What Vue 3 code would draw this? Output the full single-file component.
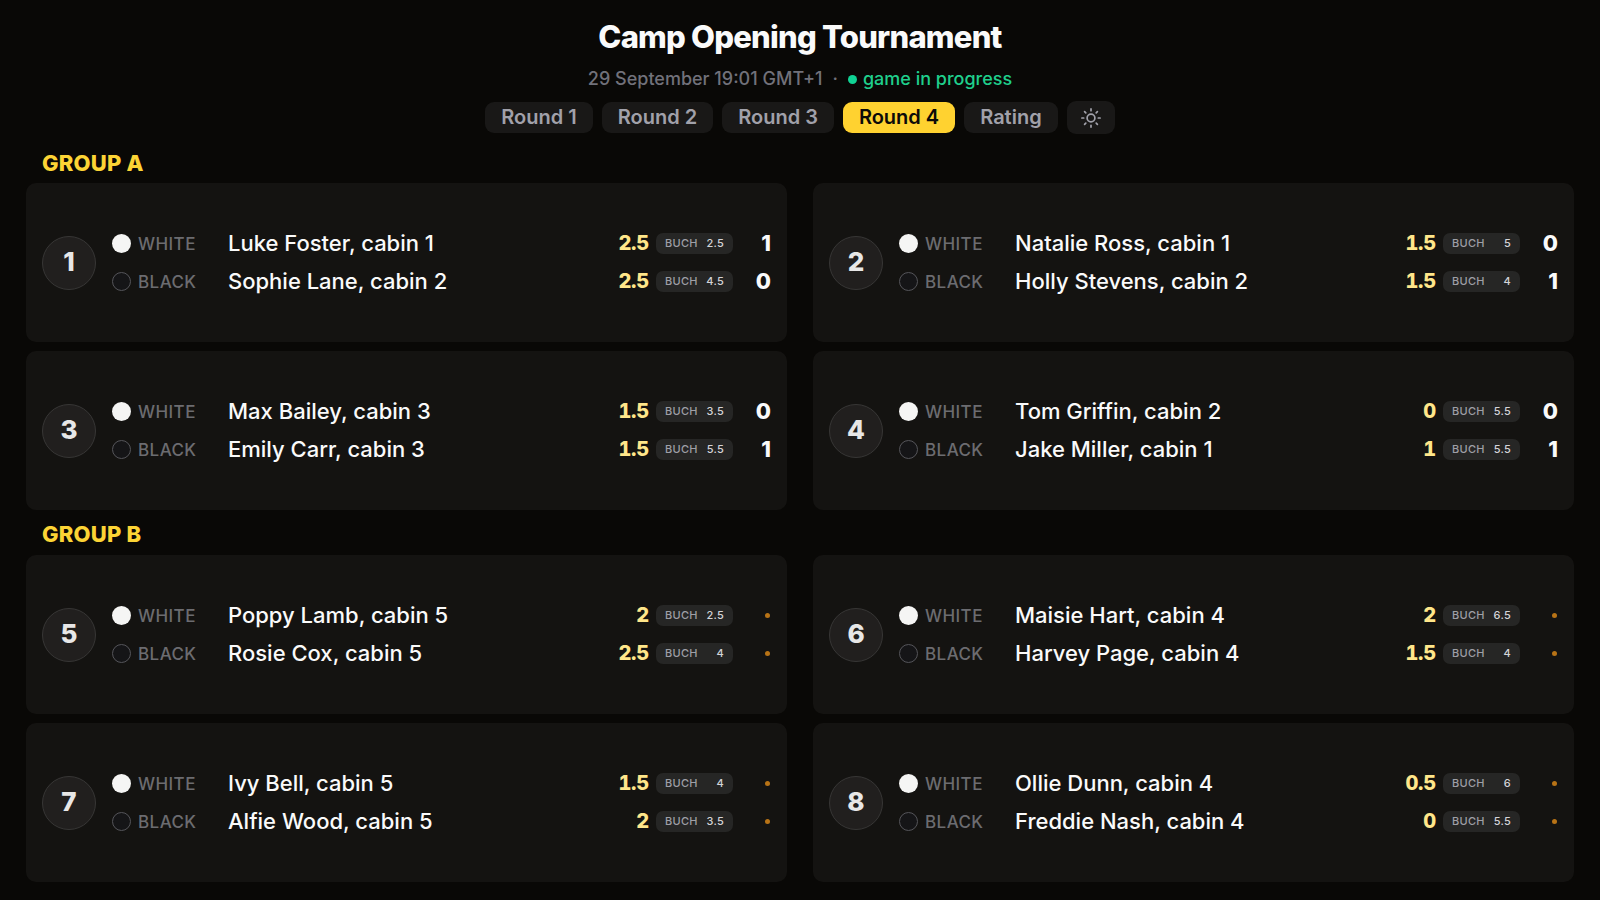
<script setup>
import { ref } from 'vue'

const tabs = ['Round 1', 'Round 2', 'Round 3', 'Round 4', 'Rating']
const active = ref('Round 4')

const player = (name, points, buch, result = null) => ({ name, points, buch, result })

const groups = [
  {
    title: 'Group A',
    boards: [
      { no: 1, white: player('Luke Foster, cabin 1', '2.5', '2.5', '1'), black: player('Sophie Lane, cabin 2', '2.5', '4.5', '0') },
      { no: 2, white: player('Natalie Ross, cabin 1', '1.5', '5', '0'), black: player('Holly Stevens, cabin 2', '1.5', '4', '1') },
      { no: 3, white: player('Max Bailey, cabin 3', '1.5', '3.5', '0'), black: player('Emily Carr, cabin 3', '1.5', '5.5', '1') },
      { no: 4, white: player('Tom Griffin, cabin 2', '0', '5.5', '0'), black: player('Jake Miller, cabin 1', '1', '5.5', '1') }
    ]
  },
  {
    title: 'Group B',
    boards: [
      { no: 5, white: player('Poppy Lamb, cabin 5', '2', '2.5'), black: player('Rosie Cox, cabin 5', '2.5', '4') },
      { no: 6, white: player('Maisie Hart, cabin 4', '2', '6.5'), black: player('Harvey Page, cabin 4', '1.5', '4') },
      { no: 7, white: player('Ivy Bell, cabin 5', '1.5', '4'), black: player('Alfie Wood, cabin 5', '2', '3.5') },
      { no: 8, white: player('Ollie Dunn, cabin 4', '0.5', '6'), black: player('Freddie Nash, cabin 4', '0', '5.5') }
    ]
  }
]
</script>

<template>
  <main class="page">
    <header class="header">
      <h1 class="title">Camp Opening Tournament</h1>
      <p class="meta">
        <span>29 September 19:01 GMT+1</span>
        <span class="sep">·</span>
        <span class="status"><i class="status-dot"></i>game in progress</span>
      </p>
      <nav class="tabs">
        <button
          v-for="tab in tabs"
          :key="tab"
          type="button"
          class="tab"
          :class="{ active: tab === active }"
          @click="active = tab"
        >{{ tab }}</button>
        <button type="button" class="theme" aria-label="Toggle theme">
          <svg width="20" height="20" viewBox="0 0 20 20" fill="none" stroke="currentColor" stroke-width="1.7" stroke-linecap="round">
            <circle cx="10" cy="10" r="3.9" />
            <path d="M10 .9v1.8M10 17.3v1.8M.9 10h1.8M17.3 10h1.8M3.6 3.6l1.2 1.2M15.2 15.2l1.2 1.2M3.6 16.4l1.2-1.2M15.2 4.8l1.2-1.2" />
          </svg>
        </button>
      </nav>
    </header>

    <section v-for="group in groups" :key="group.title" class="group">
      <h2 class="group-title">{{ group.title }}</h2>
      <div class="boards">
        <article v-for="board in group.boards" :key="board.no" class="board">
          <div class="number">{{ board.no }}</div>
          <div class="players">
            <div v-for="side in ['white', 'black']" :key="side" class="player">
              <span class="side"><i class="piece" :class="side"></i>{{ side }}</span>
              <span class="name">{{ board[side].name }}</span>
              <span class="points">{{ board[side].points }}</span>
              <span class="buch"><span>BUCH</span><b>{{ board[side].buch }}</b></span>
              <span class="result">
                <template v-if="board[side].result !== null">{{ board[side].result }}</template>
                <i v-else class="pending"></i>
              </span>
            </div>
          </div>
        </article>
      </div>
    </section>
  </main>
</template>

<style>
body {
  background: #090806;
}
</style>

<style scoped>
.page {
  box-sizing: border-box;
  min-height: 100vh;
  display: flex;
  flex-direction: column;
  padding: 17px 26px 18px;
  background: #090806;
  color: #fafafa;
  font-family: Inter, "Liberation Sans", sans-serif;
}
.header {
  display: flex;
  flex-direction: column;
  align-items: center;
}
.title {
  margin: 0;
  font-size: 31px;
  line-height: 40px;
  font-weight: 800;
  letter-spacing: -0.025em;
}
.meta {
  display: flex;
  align-items: center;
  gap: 10px;
  margin: 9px 0;
  font-size: 18px;
  line-height: 26px;
  font-weight: 500;
  color: #71717a;
}
.status {
  display: flex;
  align-items: center;
  gap: 6px;
  color: #1fcf8c;
}
.status-dot {
  width: 9px;
  height: 9px;
  border-radius: 50%;
  background: #10d394;
}
.tabs {
  display: flex;
  align-items: center;
  gap: 9px;
}
.tab,
.theme {
  border: 0;
  padding: 0 16px;
  border-radius: 9px;
  background: #191817;
  color: #a1a1aa;
  font-family: inherit;
  cursor: pointer;
}
.tab {
  height: 31px;
  font-size: 20px;
  line-height: 31px;
  font-weight: 600;
}
.tab.active {
  background: #ffd230;
  color: #0c0a09;
}
.theme {
  display: flex;
  align-items: center;
  justify-content: center;
  width: 48px;
  height: 33px;
  padding: 0;
}
.group {
  flex: 1;
  display: flex;
  flex-direction: column;
}
.group-title {
  margin: 0;
  padding: 10px 16px 7px;
  font-size: 22px;
  line-height: 28px;
  font-weight: 800;
  letter-spacing: 0.01em;
  color: #fcd435;
  text-transform: uppercase;
}
.header + .group .group-title {
  padding: 15px 16px 6px;
}
.boards {
  flex: 1;
  display: grid;
  grid-template-columns: 1fr 1fr;
  grid-auto-rows: 1fr;
  gap: 9px 26px;
}
.board {
  display: flex;
  align-items: center;
  gap: 16px;
  padding: 0 16px;
  border-radius: 10px;
  background: #141311;
}
.number {
  box-sizing: border-box;
  flex: none;
  width: 54px;
  height: 54px;
  border: 1px solid #373635;
  border-radius: 50%;
  background: #211f1e;
  color: #e7e7e7;
  font-size: 26px;
  line-height: 50px;
  font-weight: 800;
  text-align: center;
}
.players {
  flex: 1;
  min-width: 0;
  display: flex;
  flex-direction: column;
  gap: 8px;
}
.player {
  display: flex;
  align-items: center;
  height: 30px;
}
.side {
  display: flex;
  align-items: center;
  gap: 7px;
  width: 116px;
  font-size: 17px;
  font-weight: 500;
  letter-spacing: 0.025em;
  color: #6c6c70;
  text-transform: uppercase;
}
.piece {
  box-sizing: border-box;
  width: 19px;
  height: 19px;
  border-radius: 50%;
}
.piece.white {
  background: #f5f5f4;
}
.piece.black {
  border: 1px solid #55555a;
  background: #151517;
}
.name,
.points,
.result {
  padding-bottom: 2px;
}
.name {
  flex: 1;
  min-width: 0;
  font-size: 22px;
  font-weight: 500;
  white-space: nowrap;
}
.points {
  font-size: 20px;
  font-weight: 800;
  font-variant-numeric: tabular-nums;
  letter-spacing: -0.01em;
  color: #ffe68a;
}
.buch {
  box-sizing: border-box;
  display: flex;
  justify-content: space-between;
  width: 77px;
  margin-left: 7px;
  padding: 0 9px;
  border-radius: 7px;
  background: #262625;
  color: #9f9fa6;
  font-size: 11px;
  line-height: 21px;
  font-weight: 500;
  letter-spacing: 0.025em;
}
.buch b {
  color: #d4d4d8;
  font-weight: 500;
}
.result {
  display: flex;
  align-items: center;
  justify-content: flex-end;
  width: 38px;
  font-size: 22px;
  font-weight: 800;
}
.result:has(.pending) {
  padding-bottom: 0;
}
.pending {
  width: 5px;
  height: 5px;
  margin-right: 1px;
  border-radius: 50%;
  background: #b87316;
}
</style>
